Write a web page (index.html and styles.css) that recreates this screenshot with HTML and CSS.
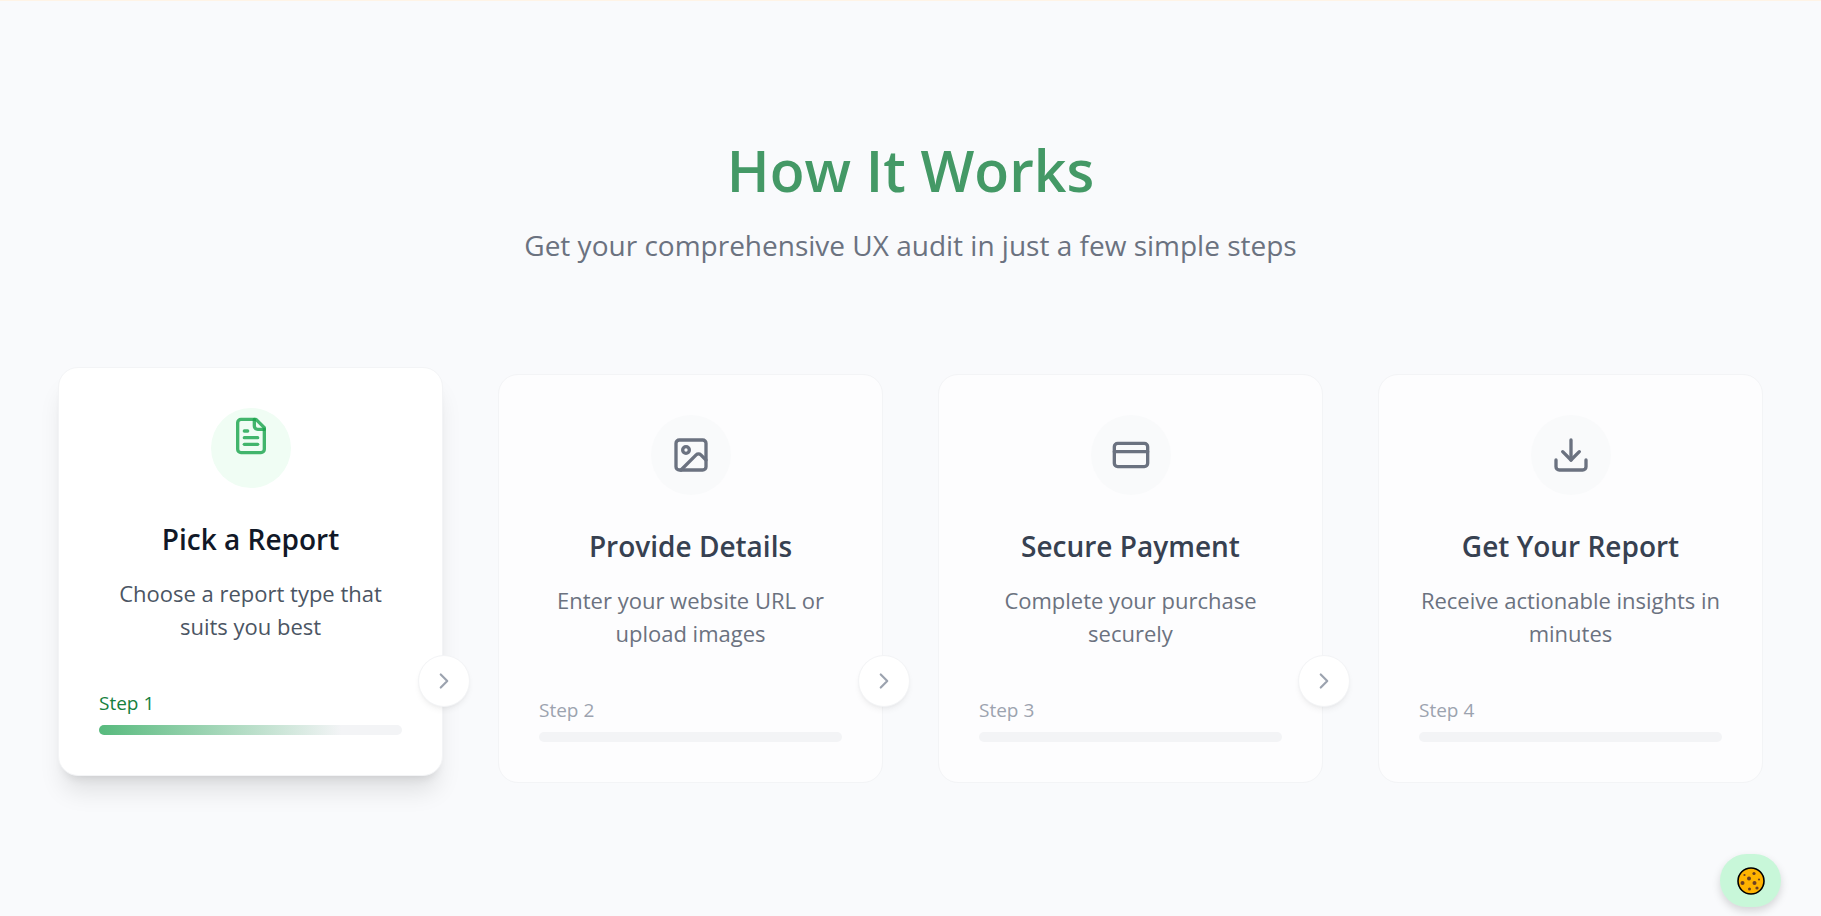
FILE: index.html
```html
<!DOCTYPE html>
<html lang="en">
<head>
<meta charset="utf-8">
<meta name="viewport" content="width=device-width, initial-scale=1">
<title>How It Works</title>
<link rel="stylesheet" href="styles.css">
</head>
<body>
<main class="how">
  <header class="intro">
    <h2 class="heading">How It Works</h2>
    <p class="lead">Get your comprehensive UX audit in just a few simple steps</p>
  </header>

  <ol class="steps">
    <li class="step step-active">
      <article class="card">
        <div class="badge">
          <svg class="icon" viewBox="0 0 24 24"><path d="M15 2H6a2 2 0 0 0-2 2v16a2 2 0 0 0 2 2h12a2 2 0 0 0 2-2V7Z"/><path d="M14 2v4a2 2 0 0 0 2 2h4"/><path d="M10 9H8"/><path d="M16 13H8"/><path d="M16 17H8"/></svg>
        </div>
        <h3 class="title">Pick a Report</h3>
        <p class="text">Choose a report type that suits you best</p>
        <p class="label">Step 1</p>
        <div class="track"><div class="fill"></div></div>
      </article>
      <button class="next" type="button" aria-label="Go to step 2"><svg class="chevron" viewBox="0 0 24 24"><path d="m9 18 6-6-6-6"/></svg></button>
    </li>
    <li class="step">
      <article class="card">
        <div class="badge">
          <svg class="icon" viewBox="0 0 24 24"><rect x="3" y="3" width="18" height="18" rx="2"/><circle cx="9" cy="9" r="2"/><path d="m21 15-3.086-3.086a2 2 0 0 0-2.828 0L6 21"/></svg>
        </div>
        <h3 class="title">Provide Details</h3>
        <p class="text">Enter your website URL or upload images</p>
        <p class="label">Step 2</p>
        <div class="track"></div>
      </article>
      <button class="next" type="button" aria-label="Go to step 3"><svg class="chevron" viewBox="0 0 24 24"><path d="m9 18 6-6-6-6"/></svg></button>
    </li>
    <li class="step">
      <article class="card">
        <div class="badge">
          <svg class="icon" viewBox="0 0 24 24"><rect x="2" y="5" width="20" height="14" rx="2"/><path d="M2 10h20"/></svg>
        </div>
        <h3 class="title">Secure Payment</h3>
        <p class="text">Complete your purchase securely</p>
        <p class="label">Step 3</p>
        <div class="track"></div>
      </article>
      <button class="next" type="button" aria-label="Go to step 4"><svg class="chevron" viewBox="0 0 24 24"><path d="m9 18 6-6-6-6"/></svg></button>
    </li>
    <li class="step">
      <article class="card">
        <div class="badge">
          <svg class="icon" viewBox="0 0 24 24"><path d="M21 15v4a2 2 0 0 1-2 2H5a2 2 0 0 1-2-2v-4"/><path d="m7 10 5 5 5-5"/><path d="M12 15V3"/></svg>
        </div>
        <h3 class="title">Get Your Report</h3>
        <p class="text">Receive actionable insights in minutes</p>
        <p class="label">Step 4</p>
        <div class="track"></div>
      </article>
    </li>
  </ol>
</main>

<button class="cookie" type="button" aria-label="Cookie settings">
  <svg class="cookie-icon" viewBox="0 0 28 28">
    <circle cx="14" cy="14" r="13" fill="#ffb300" stroke="#000" stroke-width="1.6"/>
    <g fill="#6d4023"><circle cx="12" cy="11.500" r="2"/><circle cx="17" cy="6.500" r="1.600"/><circle cx="7.500" cy="8" r="1.100"/><circle cx="22" cy="12.500" r="1.100"/><circle cx="5.500" cy="16" r="2"/><circle cx="17.500" cy="16" r="2"/><circle cx="20" cy="21" r="1.600"/><circle cx="12.500" cy="22" r="1.500"/></g>
  </svg>
</button>
</body>
</html>
```
FILE: styles.css
```css
* { box-sizing: border-box; }

body {
  margin: 0;
  min-height: 100vh;
  background: #f9fafc;
  border-top: 1px solid #fff4e6;
  font-family: "Segoe UI", "Open Sans", "Noto Sans", sans-serif;
  color: #374151;
}

h2, h3, p, ol { margin: 0; padding: 0; }

.how { padding: 129px 58px; }

.intro { text-align: center; margin-bottom: 109px; }

.heading {
  font-size: 57px;
  font-weight: 600;
  line-height: 80px;
  color: #449966;
}

.lead {
  margin-top: 15px;
  font-size: 28px;
  line-height: 40px;
  color: #6b7280;
}

.steps {
  display: grid;
  grid-template-columns: repeat(4, 1fr);
  gap: 55px;
  list-style: none;
}

.step { position: relative; }

.card {
  height: 100%;
  padding: 40px;
  border: 1px solid #f3f4f6;
  border-radius: 20px;
  background: #fdfdfe;
  text-align: center;
}

.badge {
  display: flex;
  align-items: center;
  justify-content: center;
  width: 80px;
  height: 80px;
  margin: 0 auto 30px;
  border-radius: 50%;
  background: #f9fafb;
  color: #6b7280;
}

.icon {
  width: 40px;
  height: 40px;
}

.icon, .chevron {
  fill: none;
  stroke: currentColor;
  stroke-width: 2;
  stroke-linecap: round;
  stroke-linejoin: round;
}

.title {
  margin-bottom: 17px;
  font-size: 28px;
  font-weight: 600;
  line-height: 42px;
}

.text {
  margin-bottom: 45px;
  font-size: 22px;
  line-height: 33px;
  color: #6b7280;
}

.label {
  margin-bottom: 7px;
  font-size: 19px;
  line-height: 30px;
  text-align: left;
  color: #9ca3af;
}

.track {
  height: 10px;
  border-radius: 5px;
  background: #f3f4f6;
  overflow: hidden;
}

.fill {
  width: 80%;
  height: 100%;
  background: linear-gradient(90deg, #57ba7d, #f3f4f6);
}

.step-active .card {
  transform: translateY(-7px);
  background: #fff;
  box-shadow: 0 20px 25px -5px rgba(0, 0, 0, 0.1), 0 8px 10px -6px rgba(0, 0, 0, 0.1);
}

.step-active .badge {
  align-items: flex-start;
  padding-top: 8px;
  background: #f0fdf4;
  color: rgba(22, 163, 74, 0.8);
}

.step-active .title { color: #111827; }
.step-active .text { color: #4b5563; }
.step-active .label { color: #15803d; }

/* Sits over the right edge of its card */
.next {
  position: absolute;
  right: -27px;
  bottom: 76px;
  z-index: 1;
  display: flex;
  align-items: center;
  justify-content: center;
  width: 52px;
  height: 52px;
  padding: 0;
  border: 1px solid #f3f4f6;
  border-radius: 50%;
  background: #fff;
  color: #9ca3af;
  box-shadow: 0 4px 6px -1px rgba(0, 0, 0, 0.05), 0 2px 4px -2px rgba(0, 0, 0, 0.05);
}

.chevron {
  width: 26px;
  height: 26px;
}

.cookie {
  position: fixed;
  right: 40px;
  bottom: 9px;
  display: flex;
  align-items: center;
  justify-content: center;
  width: 61px;
  height: 53px;
  padding: 0;
  border: 0;
  border-radius: 27px;
  background: #c8f7d9;
  box-shadow: 0 4px 8px rgba(0, 0, 0, 0.15);
}

.cookie-icon {
  width: 28px;
  height: 28px;
}
```
